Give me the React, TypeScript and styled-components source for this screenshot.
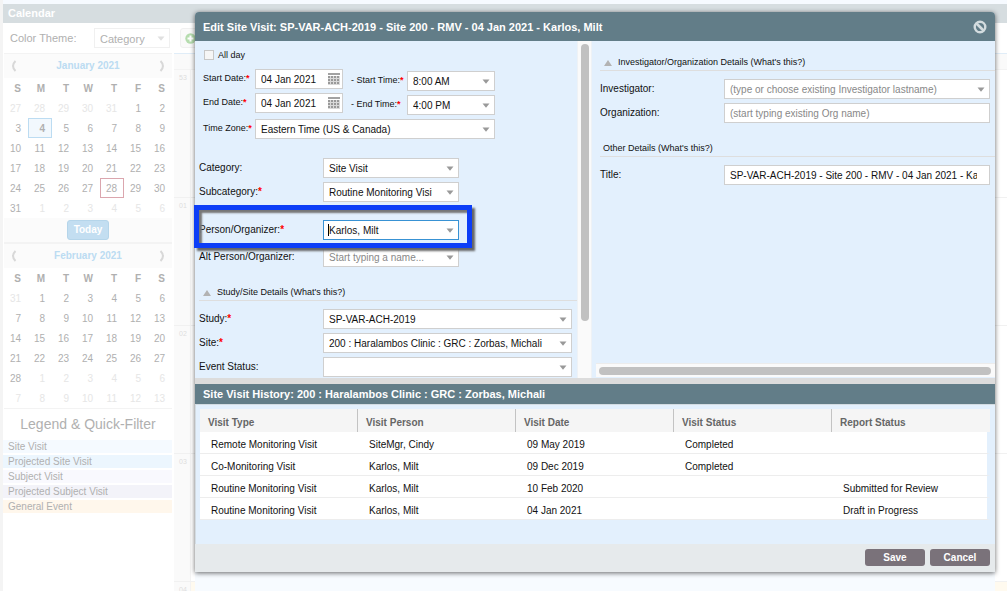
import React from "react";
import styled, { createGlobalStyle, css } from "styled-components";

const color = {
  slate: "#627d88",
  panel: "#e3f0fd",
  strip: "#dcdcdc",
  fieldBorder: "#cfcfcf",
  accent: "#3892d4",
  mark: "#0d3ef7",
};

const GlobalStyle = createGlobalStyle`
  *, *::before, *::after { box-sizing: border-box; }
  body {
    margin: 0;
    background: #f6faff;
    font-family: "Liberation Sans", Arial, Helvetica, sans-serif;
    font-size: 10px;
    line-height: 12px;
    color: #111;
  }
  button, input, select { font: inherit; color: inherit; margin: 0; }
`;

/* ---------- Calendar page behind the dialog ---------- */

const Page = styled.div`
  position: relative;
  height: 100vh;
  padding: 4px 0 0 3px;
  background: linear-gradient(90deg, #f4f4f4 3px, transparent 3px), linear-gradient(#f6faff 4px, #fff 4px);
  display: flex;
  flex-direction: column;
  overflow: hidden;
`;

const PageTitle = styled.h1`
  margin: 0;
  height: 19px;
  padding-left: 5px;
  background: #d6dde0;
  color: #fff;
  font-size: 11px;
  line-height: 19px;
`;

const Toolbar = styled.div`
  height: 30px;
  padding-left: 7px;
  display: flex;
  align-items: center;
  font-size: 11px;
  color: #b0b0b0;
`;

const ThemeLabel = styled.label`
  width: 84px;
`;

const AddButton = styled.button`
  width: 60px;
  height: 20px;
  margin-left: 10px;
  padding: 0 0 0 4px;
  display: flex;
  align-items: center;
  border: 1px solid #f0f0f0;
  border-radius: 3px;
  background: #fafafa;
`;

const Columns = styled.div`
  flex: 1;
  display: flex;
  min-height: 0;
`;

const Sidebar = styled.aside`
  width: 170px;
  color: #b0b0b0;
`;

const MonthBox = styled.section`
  margin: 0 1px;
  border: 1px solid #f3f3f3;
  border-width: 1px 0;
`;

const MonthHead = styled.div`
  height: 24px;
  padding: 0 6px;
  display: flex;
  align-items: center;
  justify-content: space-between;
  background: #fbfbfb;
  color: #bcdcf2;
  font-weight: bold;
`;

const MonthArrow = styled.button`
  border: 0;
  padding: 0;
  width: 8px;
  height: 12px;
  background: none;
  display: flex;
  svg { width: 8px; height: 12px; }
`;

const DayTable = styled.table`
  width: 100%;
  table-layout: fixed;
  border-collapse: separate;
  border-spacing: 0;
  th, td {
    height: 20px;
    padding: 2px 7px 0 0;
    text-align: right;
  }
`;

const Day = styled.td<{ $muted?: boolean; $mark?: "selected" | "today" }>`
  ${(p) => p.$muted && css`color: #e6e6e6;`}
  ${(p) =>
    p.$mark === "selected" &&
    css`
      background: #f2f8fd;
      box-shadow: inset 0 0 0 1px #bcdcf2;
      font-weight: bold;
    `}
  ${(p) => p.$mark === "today" && css`box-shadow: inset 0 0 0 1px #dba6ae;`}
`;

const MonthFoot = styled.div`
  height: 24px;
  display: flex;
  justify-content: center;
  align-items: center;
  background: #fbfbfb;
`;

const TodayButton = styled.button`
  width: 42px;
  height: 20px;
  padding: 0;
  border: 1px solid #b5d5ea;
  border-radius: 3px;
  background: #c3def1;
  color: #fff;
  font-weight: bold;
`;

const LegendTitle = styled.h2`
  margin: 7px 0 8px;
  font-size: 14px;
  font-weight: normal;
  line-height: 16px;
  text-align: center;
`;

const Legend = styled.ul`
  list-style: none;
  margin: 0;
  padding: 0;
  display: grid;
  gap: 2px;
`;

const LegendItem = styled.li<{ $bg: string }>`
  height: 13px;
  margin-right: 1px;
  padding-left: 5px;
  line-height: 13px;
  background: ${(p) => p.$bg};
`;

const WeekGrid = styled.div`
  flex: 1;
  margin-left: 1px;
  border-top: 1px solid #e0edf8;
  background: #fff;
`;

const WeekHead = styled.div`
  height: 16px;
  border-bottom: 1px solid #f3f3f3;
  background: #fafafa;
`;

const Week = styled.div<{ $last?: boolean }>`
  height: 128px;
  border-bottom: 1px solid #f1f1f1;
  background: ${(p) => (p.$last ? "#fffaef" : "#fff")};
  font-size: 7px;
  color: #dedede;
`;

const WeekNumber = styled.div`
  width: 17px;
  height: 100%;
  padding: 2px 0 0 5px;
  border-right: 1px solid #f3f3f3;
  background: #fafafa;
`;

/* ---------- Dialog ---------- */

const Dialog = styled.form`
  position: absolute;
  top: 12px;
  left: 195px;
  right: 12px;
  border-radius: 4px 4px 0 0;
  background: ${color.panel};
  box-shadow: 0 1px 5px rgba(0, 0, 0, 0.6);
`;

const DialogUnderlay = styled.div`
  position: absolute;
  top: 560px;
  left: 195px;
  right: 12px;
  bottom: 0;
  background: #f7fbff;
`;

const DialogHead = styled.header`
  height: 29px;
  padding: 0 8px;
  display: flex;
  align-items: center;
  justify-content: space-between;
  border-radius: 4px 4px 0 0;
  background: ${color.slate};
  color: #fff;
  h2 { margin: 0; font-size: 11px; }
`;

const CloseButton = styled.button`
  width: 14px;
  height: 14px;
  padding: 0;
  border: 0;
  background: none;
  svg { display: block; }
`;

const Panels = styled.div`
  display: flex;
`;

const LeftPanel = styled.div`
  width: 382px;
  padding: 7px 0 1px 4px;
`;

const VerticalTrack = styled.div`
  width: 15px;
  padding: 3px 4px 0 3px;
  border: 1px solid #eef2f6;
  border-width: 0 1px;
  background: #fafafa;
  &::before {
    content: "";
    display: block;
    width: 8px;
    height: 277px;
    border-radius: 4px;
    background: #c1c1c1;
  }
`;

const RightPanel = styled.div`
  flex: 1;
  min-width: 0;
  padding: 9px 0 1px 4px;
  display: flex;
  flex-direction: column;
`;

const RightFields = styled.div`
  flex: 1;
  padding-left: 4px;
`;

const HorizontalTrack = styled.div`
  height: 14px;
  padding: 3px 4px 3px 3px;
  border-top: 1px solid #ececec;
  background: #fafafa;
  &::before {
    content: "";
    display: block;
    height: 8px;
    border-radius: 4px;
    background: #c1c1c1;
  }
`;

const AllDay = styled.label`
  display: flex;
  align-items: center;
  gap: 4px;
  height: 10px;
  margin: 2px 0 9px 5px;
  font-size: 9px;
  input {
    appearance: none;
    width: 10px;
    height: 10px;
    border: 1px solid #c8c8c8;
    background: #f6f6f6;
  }
`;

const Schedule = styled.div`
  margin-left: 4px;
  display: grid;
  grid-template-columns: 52px 88px 64px 88px;
  row-gap: 2px;
  margin-bottom: 19px;
`;

const ScheduleLabel = styled.label<{ $indent?: boolean; $drop?: boolean }>`
  padding-left: ${(p) => (p.$indent ? 8 : 0)}px;
  padding-top: ${(p) => (p.$drop ? 5 : 3)}px;
  font-size: 9px;
  white-space: nowrap;
`;

const ScheduleCell = styled.div<{ $drop?: boolean; $wide?: boolean }>`
  padding-top: ${(p) => (p.$drop ? 2 : 0)}px;
  height: 22px;
  ${(p) => p.$wide && css`grid-column: 2 / -1;`}
`;

const Req = styled.span`
  color: #f00;
  font-weight: bold;
`;

const Row = styled.div<{ $before?: number }>`
  position: relative;
  display: grid;
  grid-template-columns: 124px 1fr;
  margin-top: ${(p) => p.$before ?? 4}px;
  padding-right: 5px;
  > label { line-height: 19px; }
`;

const FieldBox = styled.span<{ $width?: number; $focus?: boolean; $light?: boolean }>`
  position: relative;
  display: flex;
  height: 20px;
  width: ${(p) => (p.$width ? `${p.$width}px` : "100%")};
  border: 1px solid ${(p) => (p.$focus ? color.accent : p.$light ? "#f0f0f0" : color.fieldBorder)};
  background: #fff;
  svg {
    position: absolute;
    right: 4px;
    top: 7px;
    pointer-events: none;
  }
`;

const CalendarMark = styled.span`
  svg {
    top: 3px;
    right: 2px;
  }
`;

const control = css`
  appearance: none;
  width: 100%;
  min-width: 0;
  height: 18px;
  border: 0;
  outline: 0;
  border-radius: 0;
  background: transparent;
  &::placeholder { color: #888; opacity: 1; }
`;

const Select = styled.select<{ $clip?: number }>`
  ${control}
  padding: 1px 0 0 5px;
  border-right: ${(p) => p.$clip ?? 20}px solid transparent;
`;

const Input = styled.input<{ $clip?: number }>`
  ${control}
  padding: 1px 0 0 5px;
  border-right: ${(p) => p.$clip ?? 3}px solid transparent;
`;

const Caret = styled.span`
  position: absolute;
  left: 4px;
  top: 3px;
  width: 1px;
  height: 12px;
  background: #000;
`;

const Callout = styled.div`
  position: absolute;
  left: -5px;
  top: -15px;
  width: 278px;
  height: 43px;
  z-index: 2;
  border: 5px solid ${color.mark};
  box-shadow: 3px 3px 2px #666, inset 3px 3px 2px #777;
  pointer-events: none;
`;

const Section = styled.h3<{ $before?: number; $plain?: boolean }>`
  margin: ${(p) => p.$before ?? 0}px 0 8px 0;
  height: 21px;
  padding: 6px 0 0 ${(p) => (p.$plain ? 3 : 4)}px;
  display: flex;
  gap: 6px;
  border-bottom: 1px solid #dedede;
  font-size: 9px;
  font-weight: normal;
  svg { margin-top: 4px; }
`;

const HistoryHead = styled.h2`
  margin: 0;
  height: 26px;
  padding-left: 8px;
  border-top: 6px solid ${color.strip};
  background: ${color.slate};
  color: #fff;
  font-size: 11px;
  line-height: 20px;
`;

const HistoryBody = styled.div`
  padding: 4px 5px 24px 4px;
  border-top: 1px solid #d3dce2;
  border-left: 1px solid #d3dce2;
`;

const HistoryTable = styled.table`
  width: 100%;
  table-layout: fixed;
  border-collapse: separate;
  border-spacing: 0;
  text-align: left;
  th {
    height: 23px;
    padding: 4px 8px 0;
    background: #f5f5f5;
    color: #666;
    border-right: 1px solid #c3c3c3;
  }
  th:last-child { border-right: 0; }
  td {
    height: 22px;
    padding: 4px 0 0 11px;
    background: #fff;
    border-bottom: 1px solid #ededed;
  }
  td:last-child { border-right: 3px solid ${color.panel}; }
`;

const DialogFoot = styled.footer`
  height: 28px;
  padding: 5px;
  display: flex;
  justify-content: flex-end;
  gap: 5px;
  background: #e6eaec;
`;

const ActionButton = styled.button`
  width: 60px;
  height: 17px;
  padding: 0;
  border: 0;
  border-radius: 3px;
  background: #7a727a;
  color: #fff;
  font-weight: bold;
`;

/* ---------- Drawings ---------- */

const DownArrow = ({ fill = "#999" }: { fill?: string }) => (
  <svg width="8" height="5" viewBox="0 0 8 5"><path d="M0.5 0.5h7L4 4.8z" fill={fill} /></svg>
);

const UpArrow = () => (
  <svg width="8" height="6" viewBox="0 0 8 6"><path d="M4 0L8 6H0z" fill="#b3b3b3" /></svg>
);

const CalendarIcon = () => (
  <svg width="12" height="13" viewBox="0 0 12 13">
    <path d="M0 0h12v2H0z" fill="#a2a2a2" />
    {[3, 6, 9].map((y) =>
      [0, 3, 6, 9].map((x) => <rect key={`${x}-${y}`} x={x} y={y} width="2" height="2" fill="#999" />)
    )}
    <path d="M2.500 3v9M5.500 3v9M8.500 3v9M11.500 3v9M0 5.500h12M0 8.500h12M0 11.500h12" fill="none" stroke="#d9d9d9" />
  </svg>
);

const Chevron = ({ d }: { d: string }) => (
  <svg viewBox="0 0 8 12"><path d={d} fill="none" stroke="#d8d8d8" strokeWidth="2" /></svg>
);

/* ---------- Parts ---------- */

type MonthProps = {
  name: string;
  weeks: number[][];
  lead: number;
  length: number;
  marks?: Record<number, "selected" | "today">;
  footer?: boolean;
};

function Month({ name, weeks, lead, length, marks = {}, footer }: MonthProps) {
  return (
    <MonthBox>
      <MonthHead>
        <MonthArrow type="button" aria-label="Previous month"><Chevron d="M5.500 1Q.5 6 5.500 11" /></MonthArrow>
        <span>{name}</span>
        <MonthArrow type="button" aria-label="Next month"><Chevron d="M2.500 1Q7.500 6 2.500 11" /></MonthArrow>
      </MonthHead>
      <DayTable>
        <thead>
          <tr>{["S", "M", "T", "W", "T", "F", "S"].map((d, i) => <th key={i}>{d}</th>)}</tr>
        </thead>
        <tbody>
          {weeks.map((week, w) => (
            <tr key={w}>
              {week.map((day, d) => {
                const index = w * 7 + d;
                const muted = index < lead || index >= lead + length;
                return (
                  <Day key={d} $muted={muted} $mark={muted ? undefined : marks[day]}>{day}</Day>
                );
              })}
            </tr>
          ))}
        </tbody>
      </DayTable>
      {footer && <MonthFoot><TodayButton type="button">Today</TodayButton></MonthFoot>}
    </MonthBox>
  );
}

const monthWeeks = (lead: number, length: number, previous: number) =>
  Array.from({ length: 6 }, (_, w) =>
    Array.from({ length: 7 }, (_, d) => {
      const n = w * 7 + d - lead + 1;
      return n < 1 ? previous + n : n > length ? n - length : n;
    })
  );

type PickProps = { id: string; value: string; width?: number; clip?: number; light?: boolean };

const Pick = ({ id, value, width, clip, light }: PickProps) => (
  <FieldBox $width={width} $light={light}>
    <Select id={id} defaultValue={value} $clip={clip}>
      <option value={value}>{value}</option>
    </Select>
    <DownArrow fill={light ? "#e0e0e0" : undefined} />
  </FieldBox>
);

const legend = [
  ["Site Visit", "#f5faff"],
  ["Projected Site Visit", "#ecf6fe"],
  ["Subject Visit", "#f9f9fe"],
  ["Projected Subject Visit", "#f3f3f9"],
  ["General Event", "#fff7ec"],
];

const visits = [
  ["Remote Monitoring Visit", "SiteMgr, Cindy", "09 May 2019", "Completed", ""],
  ["Co-Monitoring Visit", "Karlos, Milt", "09 Dec 2019", "Completed", ""],
  ["Routine Monitoring Visit", "Karlos, Milt", "10 Feb 2020", "", "Submitted for Review"],
  ["Routine Monitoring Visit", "Karlos, Milt", "04 Jan 2021", "", "Draft in Progress"],
];

const times = [
  { key: "start", label: "Start", date: "04 Jan 2021", time: "8:00 AM" },
  { key: "end", label: "End", date: "04 Jan 2021", time: "4:00 PM" },
];

export default function App() {
  return (
    <Page>
      <GlobalStyle />
      <PageTitle>Calendar</PageTitle>
      <Toolbar>
        <ThemeLabel htmlFor="theme">Color Theme:</ThemeLabel>
        <Pick id="theme" value="Category" width={76} light />
        <AddButton type="button" aria-label="Add event">
          <svg width="11" height="11" viewBox="0 0 11 11">
            <circle cx="5.500" cy="5.500" r="5.200" fill="#b5dcae" />
            <path d="M5.500 2.500v6M2.500 5.500h6" stroke="#fff" strokeWidth="2" />
          </svg>
        </AddButton>
      </Toolbar>
      <Columns>
        <Sidebar>
          <Month
            name="January 2021"
            weeks={monthWeeks(5, 31, 31)}
            lead={5}
            length={31}
            marks={{ 4: "selected", 28: "today" }}
            footer
          />
          <Month name="February 2021" weeks={monthWeeks(1, 28, 31)} lead={1} length={28} />
          <LegendTitle>Legend &amp; Quick-Filter</LegendTitle>
          <Legend>
            {legend.map(([name, bg]) => <LegendItem key={name} $bg={bg}>{name}</LegendItem>)}
          </Legend>
        </Sidebar>
        <WeekGrid>
          <WeekHead />
          {["53", "01", "02", "03", "04"].map((n) => (
            <Week key={n} $last={n === "04"}><WeekNumber>{n}</WeekNumber></Week>
          ))}
        </WeekGrid>
      </Columns>

      <DialogUnderlay />
      <Dialog role="dialog" aria-labelledby="dialog-title" onSubmit={(e) => e.preventDefault()}>
        <DialogHead>
          <h2 id="dialog-title">Edit Site Visit: SP-VAR-ACH-2019 - Site 200 - RMV - 04 Jan 2021 - Karlos, Milt</h2>
          <CloseButton type="button" aria-label="Close">
            <svg width="14" height="14" viewBox="0 0 14 14" fill="none" stroke="#d3dcdf">
              <circle cx="7" cy="7" r="5.300" strokeWidth="2.400" />
              <path d="M3.500 3.500l7 7" strokeWidth="2.600" />
            </svg>
          </CloseButton>
        </DialogHead>

        <Panels>
          <LeftPanel>
            <AllDay><input type="checkbox" />All day</AllDay>
            <Schedule>
              {times.map((t) => (
                <React.Fragment key={t.key}>
                  <ScheduleLabel htmlFor={`${t.key}-date`}>{t.label} Date:<Req>*</Req></ScheduleLabel>
                  <ScheduleCell>
                    <FieldBox>
                      <Input id={`${t.key}-date`} defaultValue={t.date} $clip={20} />
                      <CalendarMark><CalendarIcon /></CalendarMark>
                    </FieldBox>
                  </ScheduleCell>
                  <ScheduleLabel htmlFor={`${t.key}-time`} $indent $drop>- {t.label} Time:<Req>*</Req></ScheduleLabel>
                  <ScheduleCell $drop><Pick id={`${t.key}-time`} value={t.time} /></ScheduleCell>
                </React.Fragment>
              ))}
              <ScheduleLabel htmlFor="zone" $drop>Time Zone:<Req>*</Req></ScheduleLabel>
              <ScheduleCell $wide $drop><Pick id="zone" value="Eastern Time (US &amp; Canada)" /></ScheduleCell>
            </Schedule>

            <Row $before={0}>
              <label htmlFor="category">Category:</label>
              <Pick id="category" value="Site Visit" width={136} />
            </Row>
            <Row>
              <label htmlFor="subcategory">Subcategory:<Req>*</Req></label>
              <Pick id="subcategory" value="Routine Monitoring Visit" width={136} clip={26} />
            </Row>
            <Row $before={18}>
              <label htmlFor="person">Person/Organizer:<Req>*</Req></label>
              <FieldBox $width={136} $focus>
                <Input id="person" defaultValue="Karlos, Milt" $clip={20} />
                <Caret />
                <DownArrow />
              </FieldBox>
              <Callout />
            </Row>
            <Row $before={7}>
              <label htmlFor="alt">Alt Person/Organizer:</label>
              <FieldBox $width={136}>
                <Input id="alt" placeholder="Start typing a name..." $clip={20} />
                <DownArrow />
              </FieldBox>
            </Row>

            <Section $before={13}><UpArrow />Study/Site Details (What's this?)</Section>
            <Row $before={0}>
              <label htmlFor="study">Study:<Req>*</Req></label>
              <Pick id="study" value="SP-VAR-ACH-2019" />
            </Row>
            <Row>
              <label htmlFor="site">Site:<Req>*</Req></label>
              <Pick id="site" value="200 : Haralambos Clinic : GRC : Zorbas, Michali" />
            </Row>
            <Row>
              <label htmlFor="status">Event Status:</label>
              <Pick id="status" value="" />
            </Row>
          </LeftPanel>

          <VerticalTrack />

          <RightPanel>
            <RightFields>
              <Section><UpArrow />Investigator/Organization Details (What's this?)</Section>
              <Row $before={0}>
                <label htmlFor="investigator">Investigator:</label>
                <FieldBox>
                  <Input id="investigator" placeholder="(type or choose existing Investigator lastname)" $clip={20} />
                  <DownArrow />
                </FieldBox>
              </Row>
              <Row>
                <label htmlFor="organization">Organization:</label>
                <FieldBox><Input id="organization" placeholder="(start typing existing Org name)" /></FieldBox>
              </Row>
              <Section $before={13} $plain>Other Details (What's this?)</Section>
              <Row $before={0}>
                <label htmlFor="title">Title:</label>
                <FieldBox>
                  <Input
                    id="title"
                    defaultValue="SP-VAR-ACH-2019 - Site 200 - RMV - 04 Jan 2021 - Karlos, Milt"
                    $clip={12}
                  />
                </FieldBox>
              </Row>
            </RightFields>
            <HorizontalTrack />
          </RightPanel>
        </Panels>

        <HistoryHead>Site Visit History: 200 : Haralambos Clinic : GRC : Zorbas, Michali</HistoryHead>
        <HistoryBody>
          <HistoryTable>
            <thead>
              <tr>
                {["Visit Type", "Visit Person", "Visit Date", "Visit Status", "Report Status"].map((h) => (
                  <th key={h} scope="col">{h}</th>
                ))}
              </tr>
            </thead>
            <tbody>
              {visits.map((visit, r) => (
                <tr key={r}>{visit.map((cell, c) => <td key={c}>{cell}</td>)}</tr>
              ))}
            </tbody>
          </HistoryTable>
        </HistoryBody>
        <DialogFoot>
          <ActionButton type="submit">Save</ActionButton>
          <ActionButton type="button">Cancel</ActionButton>
        </DialogFoot>
      </Dialog>
    </Page>
  );
}
